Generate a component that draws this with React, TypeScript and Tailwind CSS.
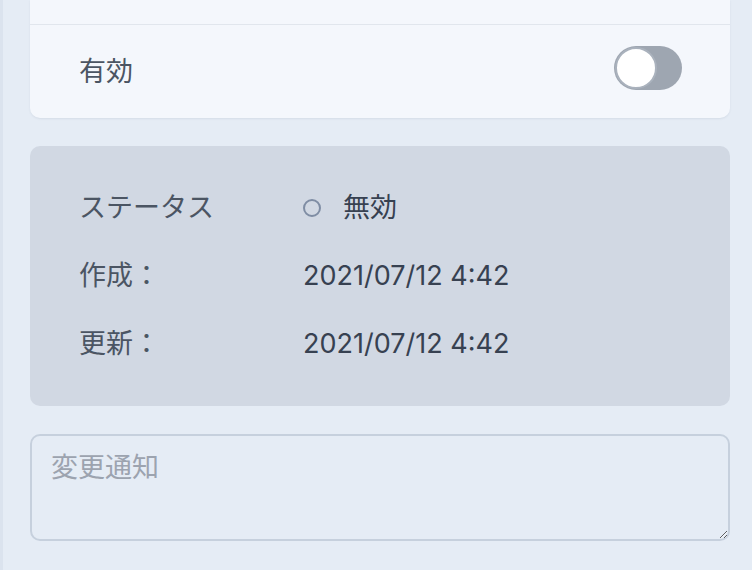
import React from 'react';

const font = { fontFamily: 'Inter, "Noto Sans CJK JP", sans-serif' };

function Toggle() {
  return (
    <div className="relative mb-[7px] h-[44px] w-[68px] rounded-full bg-[#9ea6b1]">
      <div className="absolute left-[1px] top-[1px] h-[42px] w-[42px] rounded-full border-2 border-[#aab2bd] bg-white" />
    </div>
  );
}

function InfoRow({ label, children }: { label: string; children: React.ReactNode }) {
  return (
    <div className="flex h-[36px] items-center">
      <div className="w-[224px] text-[#4b5563]">{label}</div>
      <div className="flex items-center text-[#374151]">{children}</div>
    </div>
  );
}

export default function App() {
  return (
    <div
      className="min-h-[570px] border-l-[3px] border-[#dbe3ee] bg-[#e5ecf5] pl-[27px] pr-[22px] text-[27px] leading-[36px]"
      style={font}
    >
      <div className="flex flex-col gap-[28px]">
        <div className="overflow-hidden rounded-b-[10px] bg-[#f4f7fc] shadow-[0_1px_2px_rgba(100,116,139,0.12)]">
          <div className="h-[25px] border-b border-[#e1e6ed]" />
          <div className="flex h-[93px] items-center justify-between pl-[49px] pr-[48px]">
            <span className="text-[#4b5563]">有効</span>
            <Toggle />
          </div>
        </div>

        <div className="flex flex-col gap-[32px] rounded-[10px] bg-[#d1d8e3] px-[49px] py-[44px]">
          <InfoRow label="ステータス">
            <span className="mr-[22px] h-[18px] w-[18px] rounded-full border-2 border-[#7f8da4]" />
            無効
          </InfoRow>
          <InfoRow label="作成：">2021/07/12 4:42</InfoRow>
          <InfoRow label="更新：">2021/07/12 4:42</InfoRow>
        </div>

        <textarea
          placeholder="変更通知"
          className="block h-[107px] w-full rounded-[10px] border-2 border-[#c6d0dd] bg-[#e5ecf5] px-[19px] pt-[14px] pb-[10px] text-[27px] leading-[36px] text-[#374151] placeholder:text-[#9ca3af] outline-none"
          style={font}
        />
      </div>
    </div>
  );
}
